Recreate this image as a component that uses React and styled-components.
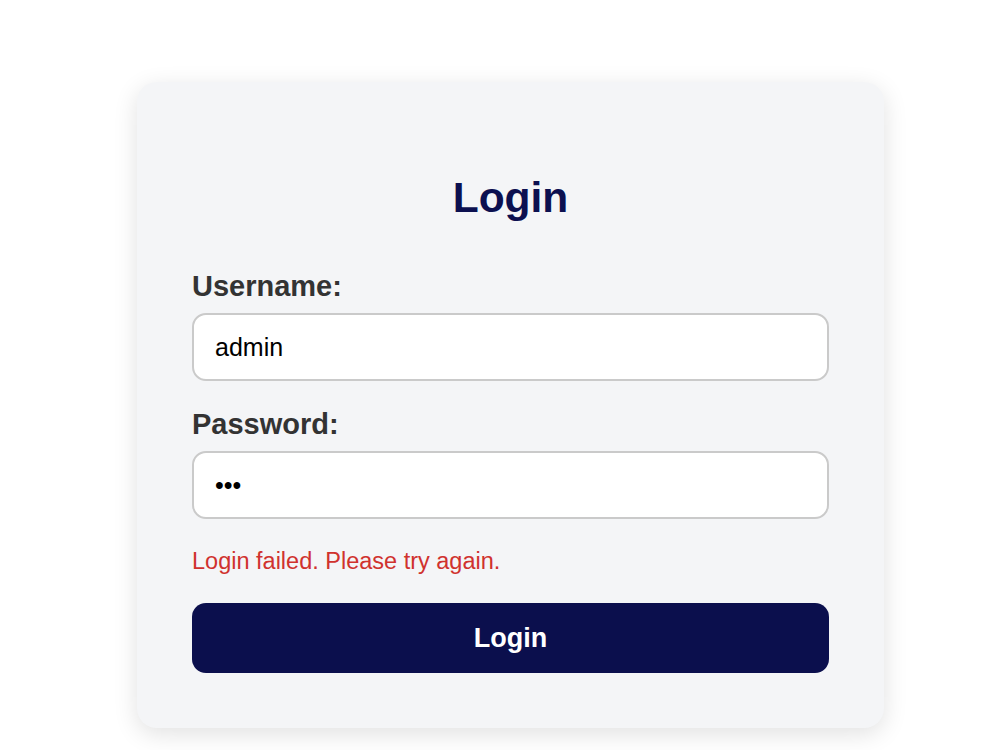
import React from 'react'
import styled, { createGlobalStyle } from 'styled-components'

const GlobalStyle = createGlobalStyle`
    html, body {
        margin: 0;
        padding: 0;
        background: #ffffff;
        font-family: "Liberation Sans", Arial, Helvetica, sans-serif;
    }
`

const Page = styled.div`
    width: 1000px;
    height: 750px;
    overflow: hidden;
    padding: 82px 0 0 137px;
    box-sizing: border-box;
`

const Card = styled.form`
    width: 747px;
    box-sizing: border-box;
    padding: 92px 55px 55px;
    background-color: #f4f5f7;
    border-radius: 20px;
    box-shadow: 0 6px 24px rgba(0, 0, 0, 0.12);
    display: flex;
    flex-direction: column;
`

const Title = styled.h2`
    margin: 0 0 47px;
    font-size: 42.5px;
    line-height: 48px;
    font-weight: 700;
    text-align: center;
    color: #0c1050;
`

const Label = styled.label`
    display: block;
    margin: 0 0 10px;
    font-size: 29px;
    line-height: 34px;
    font-weight: 700;
    color: #333333;
`

const Input = styled.input`
    display: block;
    width: 100%;
    height: 68px;
    box-sizing: border-box;
    padding: 0 21px;
    margin-bottom: ${props => props.$last ? '29px' : '26px'};
    border: 2px solid #cacaca;
    border-radius: 14px;
    background: #ffffff;
    font-family: "Liberation Sans", Arial, sans-serif;
    font-size: 25px;
    color: #000000;
    outline: none;
`

const ErrorText = styled.p`
    margin: 0 0 28px;
    font-size: 23.5px;
    line-height: 27px;
    color: #d0322e;
`

const Button = styled.button`
    width: 100%;
    height: 70px;
    border: none;
    border-radius: 14px;
    background-color: #0b0f4d;
    color: #ffffff;
    font-family: "Liberation Sans", Arial, sans-serif;
    font-size: 27px;
    font-weight: 700;
    cursor: pointer;
`

export default class App extends React.Component {
    state = {
        username: 'admin',
        password: 'abc'
    }

    handleChange = (e) => {
        this.setState({ [e.target.name]: e.target.value })
    }

    render() {
        return (
            <Page>
                <GlobalStyle />
                <Card onSubmit={e => e.preventDefault()}>
                    <Title>Login</Title>
                    <Label htmlFor="username">Username:</Label>
                    <Input id="username" name="username" type="text" value={this.state.username} onChange={this.handleChange} />
                    <Label htmlFor="password">Password:</Label>
                    <Input id="password" name="password" type="password" $last value={this.state.password} onChange={this.handleChange} />
                    <ErrorText>Login failed. Please try again.</ErrorText>
                    <Button type="submit">Login</Button>
                </Card>
            </Page>
        )
    }
}
